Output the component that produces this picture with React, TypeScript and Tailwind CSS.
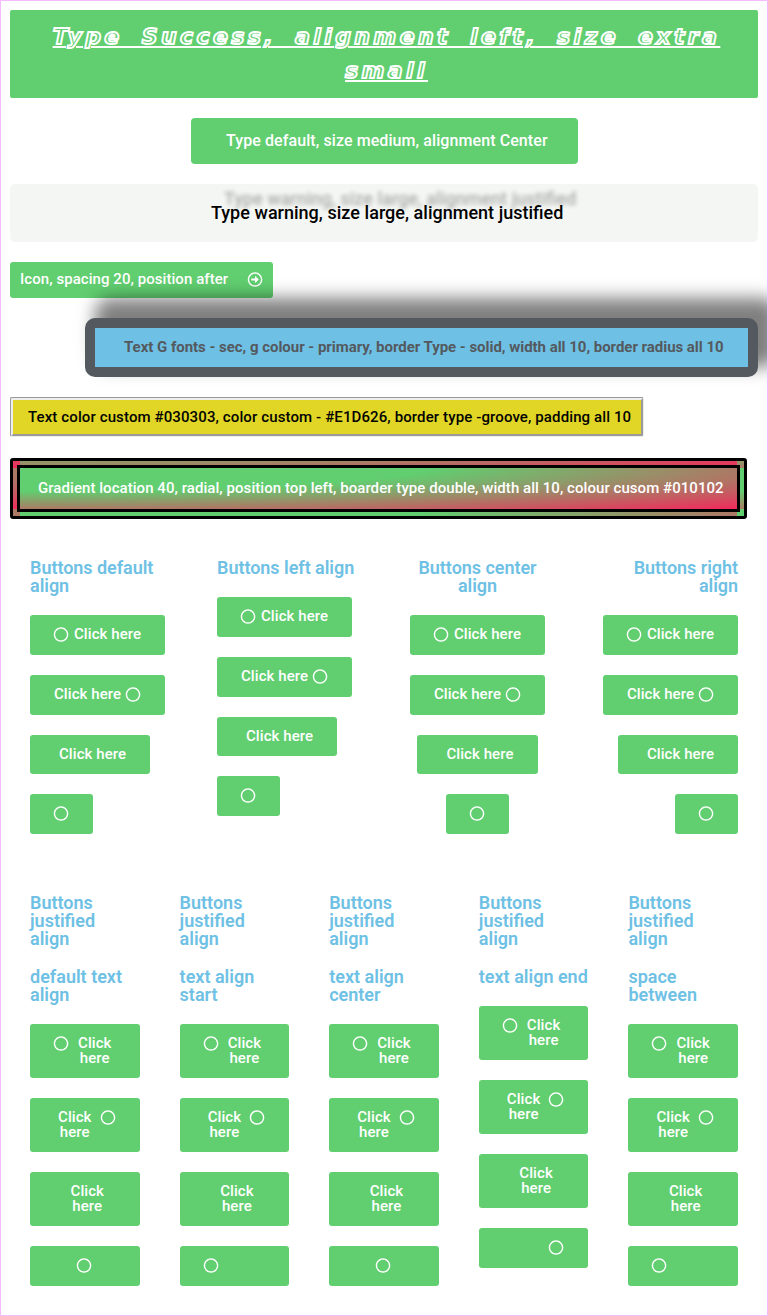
import React from "react";

type Kind = "before" | "after" | "text" | "icon";

function Ring() {
  return (
    <svg viewBox="16 0 512 512" className="h-[15px] w-[15px] shrink-0 overflow-visible" fill="white">
      <path d="M256 8C119 8 8 119 8 256s111 248 248 248 248-111 248-248S393 8 256 8zm0 448c-110.500 0-200-89.500-200-200S145.500 56 256 56s200 89.500 200 200-89.500 200-200 200z" />
    </svg>
  );
}

function Button({ kind }: { kind: Kind }) {
  const hasIcon = kind !== "text";
  return (
    <a
      className={
        "inline-flex gap-[5px] rounded-[3px] bg-[#61ce70] px-6 py-3 text-[15px] leading-[15px] font-medium tracking-[0.07px] text-white " +
        (hasIcon ? "h-10" : "h-[39px]") +
        (kind === "icon" ? " w-[63px]" : "")
      }
    >
      {(kind === "before" || kind === "icon") && <Ring />}
      {kind === "text" && <span />}
      {kind !== "icon" && <span>Click here</span>}
      {kind === "after" && <Ring />}
    </a>
  );
}

const kinds: Kind[] = ["before", "after", "text", "icon"];

function Heading({ children, className }: { children: React.ReactNode; className: string }) {
  return <h2 className={"text-[18px] leading-[18px] font-semibold text-[#6ec1e4] " + className}>{children}</h2>;
}

function Column({ title, className }: { title: string; className: string }) {
  return (
    <div className={"flex w-[147px] flex-col gap-5 " + className}>
      <Heading className="tracking-[-0.04px]">{title}</Heading>
      {kinds.map((k) => (
        <Button key={k} kind={k} />
      ))}
    </div>
  );
}

function WideColumn({ sub, justify }: { sub: string; justify: string }) {
  return (
    <div className="flex min-w-0 flex-1 flex-col gap-5 px-5">
      <Heading className="pr-3">Buttons justified align</Heading>
      <Heading className="">{sub}</Heading>
      {kinds.map((k) => (
        <a
          key={k}
          className={
            "flex gap-[5px] rounded-[3px] bg-[#61ce70] px-6 py-3 text-center text-[15px] leading-[15px] font-medium tracking-[0.07px] text-white " +
            (k === "icon" ? "h-10 " + justify : "h-[54px] justify-center")
          }
        >
          {(k === "before" || k === "icon") && <Ring />}
          {k === "text" && <span />}
          {k !== "icon" && <span className={k === "text" ? "" : "min-w-0 flex-1"}>Click here</span>}
          {k === "after" && <Ring />}
        </a>
      ))}
    </div>
  );
}

export default function App() {
  return (
    <div className="h-[1316px] w-[768px] overflow-hidden border border-[#f3bafd] bg-white p-[9px] font-['Roboto',sans-serif]">
      <div className="flex flex-col gap-5">
        <a className="flex h-[88px] justify-center rounded-[2px] bg-[#61ce70] py-[10px] pl-[5px] text-center font-['DejaVu_Sans',sans-serif] text-[22px] leading-[34px] font-bold tracking-[3.4px] text-[#61ce70] italic underline decoration-white decoration-2 underline-offset-[2px] [word-spacing:8px] [-webkit-text-stroke:1.9px_white]">
          <span>
            Type Success, alignment left, size extra
            <br />
            small
          </span>
        </a>
        <a className="ml-[181px] flex h-[46px] w-[387px] rounded-[4px] bg-[#61ce70] py-[15px] pl-[35px] text-[16px] leading-4 font-medium tracking-[0.085px] whitespace-nowrap text-white">
          Type default, size medium, alignment Center
        </a>
        <a className="flex h-[58px] rounded-[5px] bg-[#f4f6f4] py-5 pl-[201px] text-[18px] leading-[18px] font-medium whitespace-nowrap text-black [word-spacing:0.2px] [text-shadow:13px_-14px_4px_rgba(0,0,0,0.3)]">
          Type warning, size large, alignment justified
        </a>
        <a className="flex h-9 w-[263px] gap-5 rounded-[3px] bg-[#61ce70] p-[10px] text-[15px] leading-[15px] font-medium tracking-[0.06px] whitespace-nowrap text-white">
          <span>Icon, spacing 20, position after</span>
          <svg viewBox="16 0 512 512" className="h-[15px] w-[15px] shrink-0 overflow-visible" fill="white">
            <path d="M504 256C504 119 393 8 256 8S8 119 8 256s111 248 248 248 248-111 248-248zm-448 0c0-110.500 89.500-200 200-200s200 89.500 200 200-89.500 200-200 200S56 366.500 56 256zm72 20v-40c0-6.600 5.400-12 12-12h116v-67c0-10.700 12.900-16 20.500-8.500l99 99c4.700 4.700 4.700 12.300 0 17l-99 99c-7.600 7.600-20.500 2.200-20.500-8.500v-67H140c-6.600 0-12-5.400-12-12z" />
          </svg>
        </a>
        <a className="relative flex h-[59px] w-[673px] self-end rounded-[10px] border-[10px] border-[#54595f] bg-[#6ec1e4] py-3 pl-[29px] text-[15px] leading-[15px] font-bold tracking-[-0.03px] whitespace-nowrap text-[#54595f] shadow-[15px_-15px_17px_5px_rgba(0,0,0,0.5)]">
          Text G fonts - sec, g colour - primary, border Type - solid, width all 10, border radius all 10
        </a>
        <a className="relative flex h-10 w-[633.5px] rounded-[2px] border-[3px] border-[#eeeeee] bg-[#e1d626] py-[10px] pl-[15px] text-[15px] leading-[15px] font-medium tracking-[0.115px] whitespace-nowrap text-[#030303] [border-style:groove]">
          Text color custom #030303, color custom - #E1D626, border type -groove, padding all 10
        </a>
        <a className="mt-px flex h-[61px] w-[737px] rounded-[3px] border-[10px] border-double border-black py-[13px] pl-[18px] text-[15px] leading-[15px] font-medium tracking-[0.055px] whitespace-nowrap text-white [background-image:radial-gradient(at_top_left,#61ce70_40%,#f2295b_100%)]">
          Gradient location 40, radial, position top left, boarder type double, width all 10, colour cusom #010102
        </a>
      </div>
      <div className="mt-10 flex justify-between px-5">
        <Column title="Buttons default align" className="items-start" />
        <Column title="Buttons left align" className="items-start" />
        <Column title="Buttons center align" className="items-center text-center" />
        <Column title="Buttons right align" className="items-end text-right" />
      </div>
      <div className="mt-[60px] flex">
        <WideColumn sub="default text align" justify="justify-center" />
        <WideColumn sub="text align start" justify="justify-start" />
        <WideColumn sub="text align center" justify="justify-center" />
        <WideColumn sub="text align end" justify="justify-end" />
        <WideColumn sub="space between" justify="justify-between" />
      </div>
    </div>
  );
}
